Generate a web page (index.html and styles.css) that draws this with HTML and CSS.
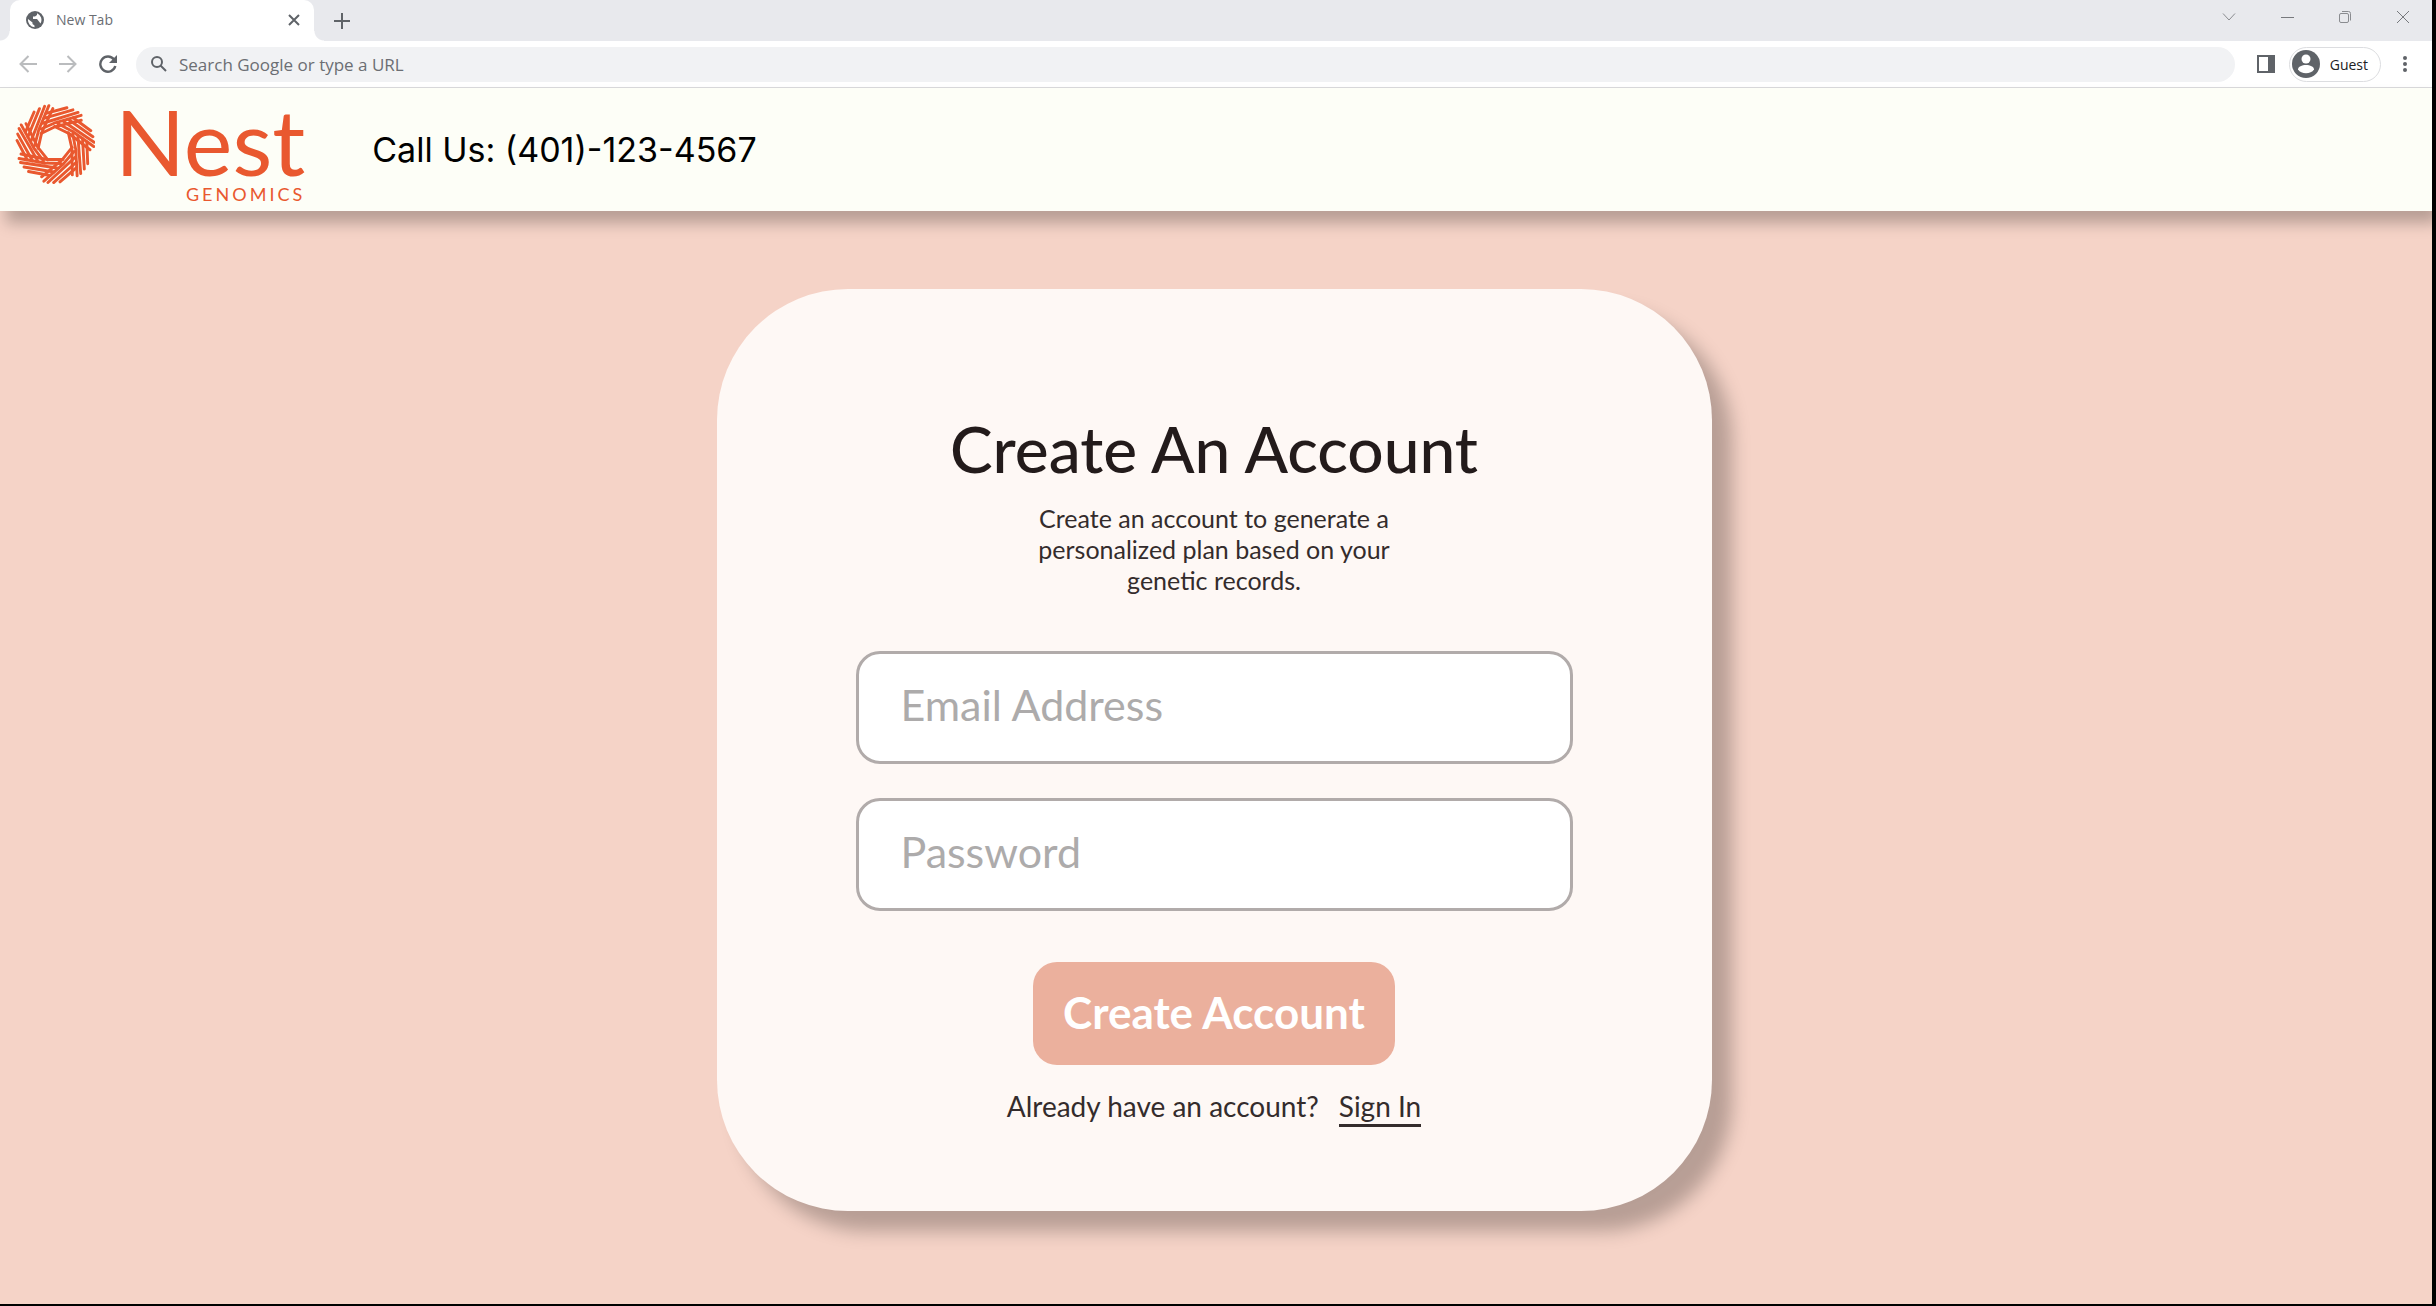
FILE: index.html
```html
<!DOCTYPE html>
<html lang="en">
<head>
    <meta charset="UTF-8">
    <title>Nest Genomics - Create An Account</title>
    <link rel="stylesheet" href="styles.css">
</head>
<body>
    <div class="window">
        <!-- Browser bar -->
        <div class="browser">
            <div class="tabs">
                <div class="tab">
                    <svg class="globe" width="18" height="18" viewBox="0 0 18 18">
                        <circle cx="9" cy="9" r="9" fill="#5f6368"/>
                        <path d="M2 8 L6.500 11.500 V13 L8.500 14.500 V16.200 A7.300 7.300 0 0 1 2 8 Z M11 2.200 V4 L9 5.500 H7 V8 H11 L13 10.500 L14.500 12.500 A7.300 7.300 0 0 0 11 2.200 Z" fill="#fff"/>
                    </svg>
                    <span class="tab-title">New Tab</span>
                    <button type="button" class="icon-btn" aria-label="Close tab">
                        <svg width="12" height="12" viewBox="0 0 12 12" stroke="#5f6368" stroke-width="2"><path d="M1 1 L11 11 M11 1 L1 11"/></svg>
                    </button>
                </div>
                <button type="button" class="icon-btn new-tab" aria-label="New tab">
                    <svg width="16" height="16" viewBox="0 0 16 16" stroke="#5f6368" stroke-width="2"><path d="M8 0 V16 M0 8 H16"/></svg>
                </button>
                <div class="window-controls">
                    <button type="button" class="icon-btn" aria-label="Search tabs">
                        <svg width="14" height="14" viewBox="0 0 14 14" fill="none" stroke="#8a8c90"><path d="M1 3.500 L7 10 L13 3.500"/></svg>
                    </button>
                    <button type="button" class="icon-btn" aria-label="Minimize">
                        <svg width="14" height="14" viewBox="0 0 14 14" fill="none" stroke="#77797d"><path d="M1 7.500 H14"/></svg>
                    </button>
                    <button type="button" class="icon-btn" aria-label="Restore">
                        <svg width="14" height="14" viewBox="0 0 14 14" fill="none" stroke="#8a8c90"><rect x="1.500" y="3.500" width="9" height="9" rx="1.500"/><path d="M4 1.500 H10.500 A2 2 0 0 1 12.500 3.500 V10.500"/></svg>
                    </button>
                    <button type="button" class="icon-btn" aria-label="Close">
                        <svg width="14" height="14" viewBox="0 0 14 14" fill="none" stroke="#77797d"><path d="M1 1 L13 13 M13 1 L1 13"/></svg>
                    </button>
                </div>
            </div>
            <div class="toolbar">
                <button type="button" class="icon-btn" aria-label="Back">
                    <svg width="18" height="18" viewBox="0 0 18 18" fill="none" stroke="#babcbe" stroke-width="2"><path d="M18 9 H2 M9.500 1 L1.500 9 L9.500 17"/></svg>
                </button>
                <button type="button" class="icon-btn" aria-label="Forward">
                    <svg width="18" height="18" viewBox="0 0 18 18" fill="none" stroke="#babcbe" stroke-width="2"><path d="M0 9 H16 M8.500 1 L16.500 9 L8.500 17"/></svg>
                </button>
                <button type="button" class="icon-btn" aria-label="Reload">
                    <svg width="18" height="18" viewBox="0 0 18 18"><path d="M15 4.500 A7.600 7.600 0 1 0 16.300 11" fill="none" stroke="#5f6368" stroke-width="2.400"/><path d="M18 0 V8 H10 Z" fill="#5f6368"/></svg>
                </button>
                <div class="address">
                    <svg width="16" height="16" viewBox="0 0 16 16" fill="none" stroke="#5f6368" stroke-width="2"><circle cx="6" cy="6" r="5"/><path d="M9.500 9.500 L15 15"/></svg>
                    <input type="text" aria-label="Address" placeholder="Search Google or type a URL">
                </div>
                <button type="button" class="icon-btn side-panel" aria-label="Side panel">
                    <svg width="18" height="18" viewBox="0 0 18 18"><rect width="18" height="18" fill="#5f6368"/><rect x="2" y="2" width="9" height="14" fill="#fff"/></svg>
                </button>
                <button type="button" class="guest">
                    <svg width="28" height="28" viewBox="0 0 28 28">
                        <circle cx="14" cy="14" r="14" fill="#5f6368"/>
                        <circle cx="14" cy="9" r="4.500" fill="#fff"/>
                        <path d="M6 19.500 C6 13.500 22 13.500 22 19.500 C19 24.500 9 24.500 6 19.500 Z" fill="#fff"/>
                    </svg>
                    Guest
                </button>
                <button type="button" class="icon-btn" aria-label="Menu">
                    <svg width="4" height="16" viewBox="0 0 4 16" fill="#5f6368"><circle cx="2" cy="2" r="2"/><circle cx="2" cy="8" r="2"/><circle cx="2" cy="14" r="2"/></svg>
                </button>
            </div>
        </div>

        <header>
            <a href="#" class="logo">
                <svg width="80" height="80" viewBox="-40 -40 80 80" fill="none" stroke="#e9582f" stroke-width="2.900" stroke-linecap="round" stroke-linejoin="round">
                    <defs>
                        <path id="strand" d="M-34 10 L-8 15.500 H8 M6 19.500 L-10 19 L-36 14.500 M-34.500 18.500 L2 24 M-31 23 L-1 28 M-26.500 27.500 L-5 31.500"/>
                    </defs>
                    <use href="#strand"/>
                    <use href="#strand" transform="rotate(51.430)"/>
                    <use href="#strand" transform="rotate(102.860)"/>
                    <use href="#strand" transform="rotate(154.290)"/>
                    <use href="#strand" transform="rotate(205.710)"/>
                    <use href="#strand" transform="rotate(257.140)"/>
                    <use href="#strand" transform="rotate(308.570)"/>
                </svg>
                <span class="logo-text">
                    <span class="logo-name">Nest</span>
                    <span class="logo-sub">GENOMICS</span>
                </span>
            </a>
            <p class="phone">Call Us: (401)-123-4567</p>
        </header>

        <main>
            <form class="card">
                <h1>Create An Account</h1>
                <p class="intro">Create an account to generate a personalized plan based on your genetic records.</p>
                <input type="email" class="field" id="email" name="email" aria-label="Email Address" placeholder="Email Address">
                <input type="password" class="field" id="password" name="password" aria-label="Password" placeholder="Password">
                <button type="submit" class="submit">Create Account</button>
                <p class="signin">Already have an account? <a href="#">Sign In</a></p>
            </form>
        </main>
    </div>
</body>
</html>
```
FILE: styles.css
```css
* {
    box-sizing: border-box;
}
html {
    background-color: #000;
}
body {
    margin: 0;
    font-family: Lato, sans-serif;
    color: #231b1b;
}
button {
    font-family: inherit;
    cursor: pointer;
}
.window {
    display: flex;
    flex-direction: column;
    min-height: calc(100vh - 2px);
    margin: 0 4px 2px 0;
    background-color: #f5d3c7;
    overflow: hidden;
}

/* Browser bar */
.browser {
    font-family: "Open Sans", sans-serif;
    background-color: #fff;
    border-bottom: 1px solid #d9d9db;
}
.tabs {
    display: flex;
    align-items: center;
    height: 41px;
    padding-left: 10px;
    background-color: #e8e9ed;
}
.tab {
    position: relative;
    display: flex;
    align-items: center;
    gap: 12px;
    width: 304px;
    height: 41px;
    padding: 0 14px 2px 16px;
    background-color: #fff;
    border-radius: 10px 10px 0 0;
}
.tab::before,
.tab::after {
    content: "";
    position: absolute;
    bottom: 0;
    width: 10px;
    height: 10px;
}
.tab::before {
    left: -10px;
    background: radial-gradient(circle at 0 0, #e8e9ed 9px, #fff 10px);
}
.tab::after {
    right: -10px;
    background: radial-gradient(circle at 100% 0, #e8e9ed 9px, #fff 10px);
}
.tab-title {
    flex: 1;
    font-size: 14px;
    color: #6b6e73;
}
.icon-btn {
    display: flex;
    padding: 0;
    border: none;
    background: none;
}
.new-tab {
    margin-left: 20px;
}
.window-controls {
    display: flex;
    gap: 44px;
    margin: 0 22px 8px auto;
}
.toolbar {
    display: flex;
    align-items: center;
    gap: 22px;
    height: 46px;
    padding: 0 25px 0 19px;
}
.address {
    flex: 1;
    display: flex;
    align-items: center;
    gap: 12px;
    height: 35px;
    padding: 0 15px;
    margin-left: -3px;
    background-color: #f1f2f4;
    border-radius: 18px;
}
.address input {
    flex: 1;
    padding: 0;
    border: none;
    background: none;
    font-family: inherit;
    font-size: 17px;
}
.address input::placeholder {
    color: #6b6e73;
    opacity: 1;
}
.side-panel {
    margin-right: -8px;
}
.guest {
    display: flex;
    align-items: center;
    gap: 10px;
    height: 35px;
    padding: 0 12px 0 2px;
    border: 1px solid #dcdde0;
    border-radius: 18px;
    background-color: #fff;
    font-size: 14px;
    color: #202124;
}

/* Site header */
header {
    position: relative;
    display: flex;
    align-items: center;
    gap: 67px;
    height: 123px;
    padding-left: 15px;
    background-color: #fdfef7;
    box-shadow: 6px 12px 14px rgba(0, 0, 0, 0.25);
}
.logo {
    display: flex;
    align-items: flex-start;
    gap: 20px;
    color: #e9582f;
    text-decoration: none;
}
.logo svg {
    margin-top: 7px;
}
.logo-text {
    display: flex;
    flex-direction: column;
    align-items: flex-end;
}
.logo-name {
    font-size: 92px;
    line-height: 88px;
}
.logo-sub {
    font-size: 18px;
    line-height: 18px;
    letter-spacing: 3px;
}
.phone {
    margin: 0;
    font-family: Inter, sans-serif;
    font-size: 34px;
    color: #000;
}

/* Account form */
main {
    flex: 1;
    padding: 78px 28px 92px 24px;
}
.card {
    display: flex;
    flex-direction: column;
    align-items: center;
    max-width: 995px;
    margin: 0 auto;
    padding: 120px 139px 84px;
    background-color: #fef8f5;
    border-radius: 131px;
    box-shadow: 20px 20px 18px rgba(0, 0, 0, 0.25);
}
h1 {
    margin: 0 0 14px;
    font-size: 64px;
    font-weight: 500;
    line-height: 80px;
}
.intro {
    max-width: 380px;
    margin: 0 0 55px;
    font-size: 25px;
    line-height: 31px;
    text-align: center;
    color: #342c2c;
}
.field {
    width: 100%;
    height: 113px;
    margin-bottom: 34px;
    padding: 0 42px 6px;
    border: 3px solid #b1abaa;
    border-radius: 24px;
    background-color: #fff;
    font-family: inherit;
    font-size: 43px;
}
.field::placeholder {
    color: #adabab;
    opacity: 1;
}
.submit {
    height: 103px;
    margin: 17px 0 23px;
    padding: 0 30px 4px;
    border: none;
    border-radius: 24px;
    background-color: #ebb09d;
    color: #fff;
    font-size: 44px;
    font-weight: 700;
}
.signin {
    display: flex;
    gap: 20px;
    margin: 0;
    font-size: 28px;
    line-height: 36px;
    color: #342c2c;
}
.signin a {
    border-bottom: 3px solid #342c2c;
    color: inherit;
    text-decoration: none;
}
```
